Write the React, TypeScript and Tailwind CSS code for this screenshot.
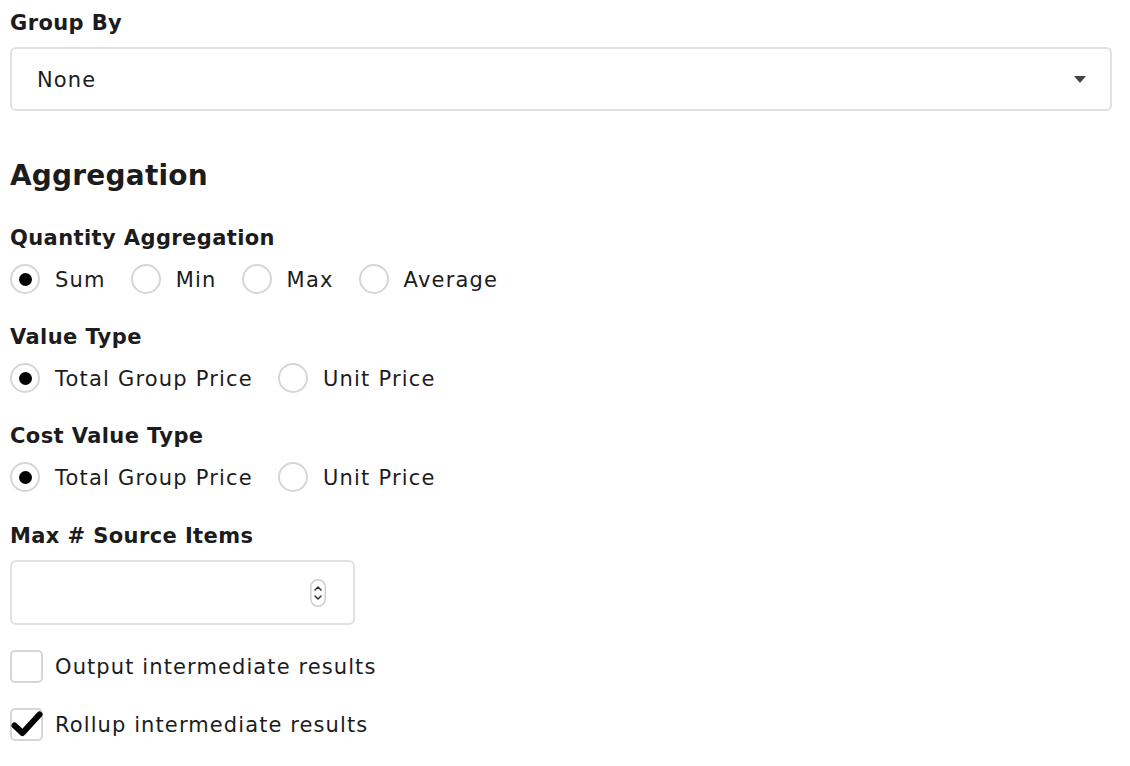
import { useState } from 'react';

const font = { fontFamily: '"DejaVu Sans", Verdana, sans-serif' };

function Radio({ checked }: { checked: boolean }) {
  return (
    <span className="w-[30px] h-[30px] rounded-full border-2 border-[#d6d6d6] bg-white flex items-center justify-center shrink-0">
      {checked && <span className="w-[13px] h-[13px] rounded-full bg-black" />}
    </span>
  );
}

function RadioGroup({ options, value }: { options: string[]; value: string }) {
  return (
    <div className="flex items-center gap-[25px] h-[30px]">
      {options.map((o) => (
        <label key={o} className="flex items-center gap-[15px]">
          <Radio checked={o === value} />
          <span className="pt-[3px] text-[21px] tracking-[1.2px] text-[#1c1c1c]">{o}</span>
        </label>
      ))}
    </div>
  );
}

function Checkbox({ checked, label }: { checked: boolean; label: string }) {
  return (
    <label className="flex items-center gap-[12px] h-[33px]">
      <span className="relative w-[33px] h-[33px] rounded-[5px] border-2 border-[#d6d6d6] bg-white shrink-0">
        {checked && (
          <svg viewBox="0 0 33 33" className="absolute -left-[2px] -top-[2px] w-[33px] h-[33px]">
            <path d="M4.5 17.5 L12.5 25 L29.5 6.5" fill="none" stroke="#000" strokeWidth="6" strokeLinecap="round" strokeLinejoin="round" />
          </svg>
        )}
      </span>
      <span className="pt-[3px] text-[21px] tracking-[1.1px] text-[#1c1c1c]">{label}</span>
    </label>
  );
}

function Label({ children }: { children: string }) {
  return <div className="text-[21px] leading-[24px] font-bold tracking-[0.4px] text-[#1c1c1c]">{children}</div>;
}

export default function App() {
  const [max] = useState('');
  return (
    <div className="w-[1130px] h-[766px] bg-white px-[10px] pt-[11px]" style={font}>
      <Label>Group By</Label>
      <div className="mt-[12px] w-[1102px] h-[64px] border-2 border-[#e1e1e1] rounded-[6px] flex items-center justify-between pl-[25px] pr-[24px]">
        <span className="pt-[3px] text-[21px] tracking-[1.1px] text-[#1c1c1c]">None</span>
        <svg viewBox="0 0 12 7" className="w-[12px] h-[7px]">
          <path d="M0 0 H12 L6 7 Z" fill="#444" />
        </svg>
      </div>

      <h2 className="mt-[48px] text-[28px] leading-[34px] font-bold tracking-[0.2px] text-[#1c1c1c]">Aggregation</h2>

      <div className="mt-[33px]">
        <Label>Quantity Aggregation</Label>
        <div className="mt-[14px]">
          <RadioGroup options={['Sum', 'Min', 'Max', 'Average']} value="Sum" />
        </div>
      </div>

      <div className="mt-[31px]">
        <Label>Value Type</Label>
        <div className="mt-[14px]">
          <RadioGroup options={['Total Group Price', 'Unit Price']} value="Total Group Price" />
        </div>
      </div>

      <div className="mt-[31px]">
        <Label>Cost Value Type</Label>
        <div className="mt-[14px]">
          <RadioGroup options={['Total Group Price', 'Unit Price']} value="Total Group Price" />
        </div>
      </div>

      <div className="mt-[32px]">
        <Label>Max # Source Items</Label>
        <div className="mt-[12px] w-[345px] h-[65px] border-2 border-[#e1e1e1] rounded-[6px] flex items-center justify-end pr-[27px]">
          <span className="sr-only">{max}</span>
          <svg viewBox="0 0 16 28" className="w-[16px] h-[28px]">
            <rect x="0.75" y="0.75" width="14.5" height="26.5" rx="7.25" fill="#fff" stroke="#cfcfcf" strokeWidth="1.5" />
            <path d="M5 11 L8 8 L11 11" fill="none" stroke="#333" strokeWidth="1.5" strokeLinecap="round" strokeLinejoin="round" />
            <path d="M5 17 L8 20 L11 17" fill="none" stroke="#333" strokeWidth="1.5" strokeLinecap="round" strokeLinejoin="round" />
          </svg>
        </div>
      </div>

      <div className="mt-[25px]">
        <Checkbox checked={false} label="Output intermediate results" />
      </div>
      <div className="mt-[25px]">
        <Checkbox checked label="Rollup intermediate results" />
      </div>
    </div>
  );
}
